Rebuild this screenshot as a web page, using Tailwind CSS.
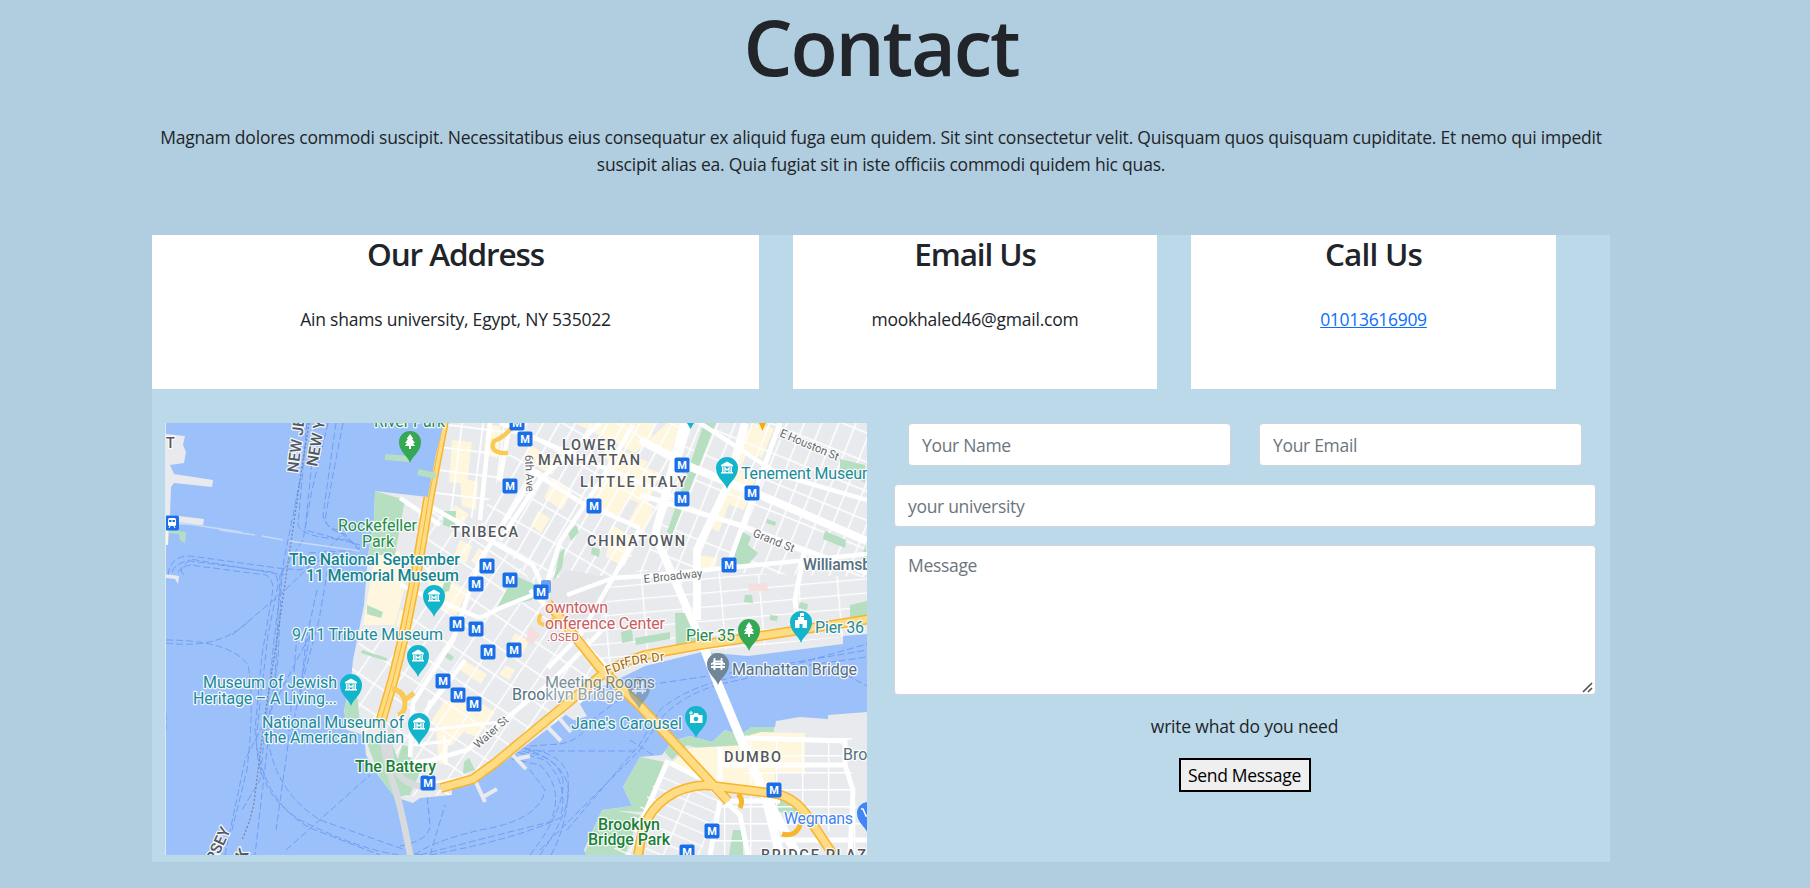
<!DOCTYPE html>
<html lang="en">
<head>
<meta charset="utf-8">
<title>Contact</title>
<script src="https://cdn.jsdelivr.net/npm/@tailwindcss/browser@4"></script>
</head>
<body class="h-[888px] overflow-hidden bg-[#b1cee0] font-['Segoe_UI','Open_Sans',sans-serif] text-[17.5px] leading-[27px] text-[#212529]">
<main class="ml-[152px] w-[1458px]">
  <header class="h-[235px] text-center">
    <h1 class="h-[96px] text-[77.5px] leading-[93px] font-semibold tracking-[-2.2px]">Contact</h1>
    <p class="pt-[28px] tracking-[-0.21px] whitespace-nowrap">Magnam dolores commodi suscipit. Necessitatibus eius consequatur ex aliquid fuga eum quidem. Sit sint consectetur velit. Quisquam quos quisquam cupiditate. Et nemo qui impedit<br>suscipit alias ea. Quia fugiat sit in iste officiis commodi quidem hic quas.</p>
  </header>
  <section class="h-[627px] bg-[#bcd9ea]">
    <div class="flex gap-[34px] text-center tracking-[-0.21px]">
      <div class="h-[154px] w-[607px] bg-white">
        <h2 class="mb-[28px] text-[31.5px] leading-[38px] font-semibold tracking-[-1.1px]">Our Address</h2>
        <p class="pt-[5px]">Ain shams university, Egypt, NY 535022</p>
      </div>
      <div class="h-[154px] w-[364px] bg-white">
        <h2 class="mb-[28px] text-[31.5px] leading-[38px] font-semibold tracking-[-1.1px]">Email Us</h2>
        <p class="pt-[5px]">mookhaled46@gmail.com</p>
      </div>
      <div class="h-[154px] w-[365px] bg-white">
        <h2 class="mb-[28px] text-[31.5px] leading-[38px] font-semibold tracking-[-0.8px]">Call Us</h2>
        <p class="pt-[5px]"><a href="#" class="tracking-[-0.31px] text-[#0d6efd] underline">01013616909</a></p>
      </div>
    </div>
    <div class="mt-[34px] flex gap-7 pl-[14px]">
      <svg class="-ml-px block h-[432px] w-[702px] shrink-0" viewBox="165 423 702 432" font-family="Roboto, sans-serif">
        <defs>
          <g id="m"><rect x="-7.5" y="-7.5" width="15" height="15" rx="2" fill="#1a6fe8"/><text y="4" text-anchor="middle" font-size="11" font-weight="700" fill="#fff">M</text></g>
          <path id="pin" d="M0 21C-2 14-11 10-11 0a11 11 0 0 1 22 0C11 10 2 14 0 21Z"/>
          <g id="museum"><use href="#pin" fill="#12b5cb"/><path d="M-6-3 0-6.500 6-3v1.500H-6ZM-5-1h1.500v5H-5ZM3.500-1H5v5H3.500ZM-6 4H6v1.500H-6Z" fill="#fff"/><path d="M-2 4v-4l2 2 2-2v4" fill="none" stroke="#fff" stroke-width="1.300"/></g>
          <g id="tree"><use href="#pin" fill="#34a853"/><path d="M0-8 3.500-3H2l3 4H3l2 3H1v3h-2V4h-4l2-3h-2l3-4h-1.500Z" fill="#fff"/></g>
          <pattern id="gA" width="21" height="23" patternUnits="userSpaceOnUse" patternTransform="translate(440 423) rotate(7)"><path d="M0 0H21M0 0V23" stroke="#fff" stroke-width="3.400"/></pattern>
          <pattern id="gB" width="14" height="27" patternUnits="userSpaceOnUse" patternTransform="translate(510 423) rotate(30)"><path d="M0 0H14M0 0V27" stroke="#fff" stroke-width="3.200"/></pattern>
          <pattern id="gC" width="16" height="27" patternUnits="userSpaceOnUse" patternTransform="translate(700 423) rotate(22)"><path d="M0 0H16M0 0V27" stroke="#fff" stroke-width="3"/></pattern>
          <pattern id="gD" width="39" height="14" patternUnits="userSpaceOnUse" patternTransform="translate(640 570) rotate(-5)"><path d="M0 0H39M0 0V14" stroke="#fff" stroke-width="2.600"/></pattern>
          <pattern id="gE" width="19" height="25" patternUnits="userSpaceOnUse" patternTransform="translate(430 600) rotate(34)"><path d="M0 0H19M0 0V25" stroke="#fff" stroke-width="2.800"/></pattern>
          <pattern id="gF" width="26" height="17" patternUnits="userSpaceOnUse" patternTransform="translate(750 738)"><path d="M0 0H26M0 0V17" stroke="#fff" stroke-width="2.800"/></pattern>
          <pattern id="gG" width="32" height="12" patternUnits="userSpaceOnUse" patternTransform="translate(666 765) rotate(23)"><path d="M0 0H32M0 0V12" stroke="#fff" stroke-width="2.600"/></pattern>
          <clipPath id="land"><path id="shore" d="M444 423 436 455 428 497 375 491 374 520 368 555 366 580 364 605 360 625 353 660 351 680 344 710 347 730 364 735 366 755 380 778 395 797 413 803 420 798 452 795 452 785 473 782 500 765 545 731 600 688 645 666 702 652 748 656 843 644 843 636 867 634V423Z"/></clipPath>
          <clipPath id="bk"><path id="bkshore" d="M867 712 828 715 828 719 800 717 776 721 775 727 752 727 740 735 725 730 712 742 690 736 672 741 662 755 640 757 623 787 632 806 602 810 584 850 586 855H867Z"/></clipPath>
        </defs>
        <rect x="165" y="423" width="702" height="432" fill="#9cc0fa"/>
        <!-- New Jersey piers -->
        <g fill="#e8eaed"><path d="M166 434 185 436 183 445 186 452 184 463 170 465 174 474 213 480 212 487 174 483 171 487 170 515 204 519 203 525 166 524Z"/><path d="m166 574 13 2-1 8-3-5-9-1Z"/></g>
        <path d="m169 530 17 2-1 11-5-3-1-6-10-1Z" fill="#b5dfc0"/><path d="M166 525h3l-1 20h-2Z" fill="#fef6dd"/>
        <!-- ferry routes -->
        <g fill="none" stroke="#6f9ff4" stroke-width="1" stroke-dasharray="7 3">
          <path d="M328 423 312 490 303 540 280 575 275 680 255 855M336 423 323 515Q325 528 338 530L360 550 308 553M343 423 332 480 325 520Q330 532 345 534L360 552M307 423 298 525Q302 538 350 540L360 548M316 423 305 530 360 545M300 480 284 560 274 640 260 780 242 810"/>
          <path d="M168 575Q170 556 190 556L278 568 300 570 335 553M172 572Q176 562 190 561L272 572Q280 576 277 590L268 635 257 730Q252 790 300 820 360 850 400 855M184 575Q176 568 190 565L266 575Q275 580 272 595L262 655 255 730Q260 800 310 828L380 855M178 572 190 559 284 575M282 570 278 660 267 730Q272 790 320 820L420 855"/>
          <path d="m232 635 50-42 60-58M166 640Q230 640 248 665 255 700 247 770L232 830M166 643Q220 650 250 620M297 635 288 745 276 830 M310 635 290 742M286 850 370 775M225 855 245 760 310 635M317 590 306 640 300 700M331 550 319 620 300 690"/>
          <path d="M415 855Q430 842 480 830 540 820 545 790L530 770Q505 750 520 740M420 855Q500 834 550 822 565 790 540 765L512 759M430 855Q520 838 560 818 570 785 545 760L510 750M530 855Q565 810 563 780 558 758 530 753L518 750M540 855Q572 810 568 785 560 757 518 747M551 855Q570 820 568 775 560 750 518 748M528 751H640M530 746 560 744Q582 740 592 720L625 695M400 846Q430 840 430 825L427 795M430 855 445 805M540 850 640 750 662 717Q690 688 740 680L867 644M567 830 640 744 660 710Q690 683 760 672L867 657M640 686 750 670 867 650M838 670 867 686M630 740 656 757M166 730v-20"/>
        </g>
        <path d="M309 423 300 480 287 570 276 645 265 715 255 795Q253 815 242 840" fill="none" stroke="#7587a8" stroke-width="1.300" stroke-dasharray="2 2"/>
        <path d="m175 522 66 10M220 530 255 535M262 536 283 540M289 541 360 551" stroke="#c7dafa" stroke-width="1.500"/>
        <!-- piers -->
        <g stroke="#e8eaed" stroke-width="4" fill="none"><path d="m475 780 10 22M483 797 497 789M510 752 526 769M516 759 530 756M534 713 561 741M548 705 571 732"/><path d="m552 703 18-12 14 24-10 3-14-10Z" fill="#e8eaed"/></g>
        <!-- Manhattan -->
        <use href="#shore" fill="#e8eaed"/>
        <g clip-path="url(#land)">
          <g fill="#fef6dd">
            <path d="m452 440 20 2-5 42-18-2ZM460 478l18 4-2 28-14-4ZM487 425l14 1-3 32-14-3ZM455 505l14 9-8 14-14-8ZM375 555l25-4 5 34-10 40-32 0ZM430 570l38 20-12 25-30-12ZM460 540l12 6-6 17-12-7ZM479 548l9 6-8 13-9-6ZM530 445l30 18-8 12-28-16ZM575 423l60 30 32-30ZM600 440l48 22-30 55-28-12 20-38ZM640 465l20 8-13 33-18-7ZM553 478l20 12-11 20-18-12ZM538 511l12 7-9 15-10-8ZM612 525l24 14-12 28-18-10ZM640 500l14 6-10 26-16-10ZM655 423l26 0-10 30-22-8ZM752 423l22 5-12 30-16-7ZM738 470l18 8-12 32-16-6ZM700 555l18 3-4 13-18-3ZM746 430l8 2-35 100-10-5Z"/>
            <path d="m445 700 22 4 4 20-20 22-14-6 4-14-10-4ZM470 695l25 18-18 24-12-4ZM436 730l12 0v34h-9ZM506 665l9 5-6 10-10-6ZM463 660l24 14-6 10-24-16ZM515 633l14 8-6 12-14-8ZM400 610l12 4-6 16-10-4Z"/>
          </g>
          <path d="M436 423H527L500 475 480 520 420 505Z" fill="url(#gA)"/>
          <path d="M527 423H694L650 535 613 578 541 592 480 520 500 475Z" fill="url(#gB)"/>
          <path d="M694 423H867V577L640 570 655 535Z" fill="url(#gC)"/>
          <path d="M640 570 867 577V634L590 665 567 595Z" fill="url(#gD)"/>
          <path d="M420 505 480 520 541 592 590 640 600 690 452 795 395 797 340 700 360 640 400 635Z" fill="url(#gE)"/>
          <g fill="#b5dfc0">
            <path d="M375 491 405 500 395 555 368 555ZM444 511l12 0-1 18-12-4ZM497 608 514 575 542 588 532 600ZM704 423h12L672 535l-5-3ZM568 533l8-8 3 7-8 9ZM560 552l5-4-3 20-9 14ZM592 547l8 2-1 8-8-3ZM840 459l25 6v18l-25-15ZM825 531l21 9-1 8-22-9ZM741 531l10 6-3 8 10 8-13 15-12-7ZM745 595h7l1 8-9-1ZM675 613l14 0 8 28-21 5ZM621 632l11-3 1 12-11 2ZM635 638l35-6v7l-34 6ZM850 605l17-4v20l-17 3ZM800 602l8 2-1 6-9-2ZM866 545l1 18-6-6ZM767 519l9 3-1 4-9-3ZM367 605l16 7-2 6-14-4ZM362 650l25 8-1 3-25-8ZM351 683 358 700 360 728 347 728 344 710ZM364 735 390 738 400 765 421 770 410 795 395 797 380 778ZM402 745l8 2 1 22-14-6ZM464 762l5-4 6 12-12 4ZM444 583l8-4-3 12-8 2ZM770 615l8 1-1 5-7-1ZM445 651l9 6-3 4-8-5Z"/>
          </g>
          <path d="m748 584 19-1 1 8-19 0ZM530 625l10 10-8 10-6-4Z" fill="#f7dede"/>
          <path d="M541 592 567 570 613 578 600 620 565 625Z" fill="#e4e5e9"/>
          <g stroke="#fff" fill="none" stroke-width="4.500">
            <path d="M428 505 533 565 548 598M400 498 440 525M633 425 600 482 560 542 547 582M527 468 580 502 640 528M480 618 500 608 540 592M567 595 613 578 645 576 867 554M490 423 480 520M538 470 480 560 453 640 413 703 410 757M465 660 427 710M510 423 500 480M600 423 540 480 500 540M640 528 613 578 580 635 548 668M690 423 655 535M410 763 432 760 467 750 550 683 612 620M867 500 780 475 700 423M500 423 590 462 680 499M530 590 605 665M400 585 480 618"/>
            <path d="M427 730 500 722M412 745 450 741M446 765 444 735M433 783 480 775M420 740 430 700" stroke-width="2.800"/>
            <path stroke-width="8" d="M640 440 693 468 767 498 867 541M745 423 728 485 697 550 697 620M655 535 703 645M684 423 655 535"/>
            <path stroke-width="5" d="M640 495 740 525 800 548 867 573M804 553 795 600 797 615M780 423 730 560"/>
          </g>
          <path d="M444 418 429 497 415 580 404 635 393 680 380 724" fill="none" stroke="#f9b42d" stroke-width="11"/>
          <path d="M444 418 429 497 415 580 404 635 393 680 380 724" fill="none" stroke="#fedc84" stroke-width="8"/>
          <path d="M444 418 429 497 415 580 404 635 393 680 380 724" fill="none" stroke="#f9b42d"/>
          <path d="M392 689Q405 691 405 704 405 713 398 715M404 701 414 693" fill="none" stroke="#fbca55" stroke-width="5"/>
          <path d="M512 427Q505 437 494 441 489 451 502 453L508 453" fill="none" stroke="#fbca55" stroke-width="4.500"/>
        </g>
        <path d="M382 722Q382 750 392 780 400 800 411 860M392 726Q384 760 402 778 415 790 441 786" fill="none" stroke="#d9dade" stroke-width="6.500"/>
        <path d="M418 472 436 476M385 457 410 459" stroke="#b5dfc0" stroke-width="6"/>
        <!-- Brooklyn -->
        <use href="#bkshore" fill="#e8eaed"/>
        <g clip-path="url(#bk)">
          <path d="M752 727H774V738L745 740 740 760 687 745 672 760 660 747 690 731ZM640 757 664 762 645 812 602 810ZM602 808 640 815 625 855 584 855ZM733 830h10v25h-14ZM774 797l25 6-2 12-24-4Z" fill="#b5dfc0"/>
          <path d="M761 732 805 733 805 772 775 772 775 795 740 790 710 778 690 775 672 762 690 748 745 745 750 735Z" fill="#fef6dd"/>
          <path d="M745 738H852V790L870 855H850L800 800 745 790Z" fill="url(#gF)"/><path d="M665 765 720 800 700 855H610L645 800Z" fill="url(#gG)"/><path d="M720 790H800V855H710Z" fill="url(#gF)"/>
          <g stroke="#fff" fill="none" stroke-width="5"><path d="M668 760 640 825M670 763 700 778 740 815 748 855M720 801 710 855M720 765H845M720 747V785M745 738 845 741 845 765 853 790 850 855M730 801H780M775 840H867"/></g>
        </g>
        <path d="M703 645 718 684 740 737 765 795 800 860M765 795 780 855" fill="none" stroke="#fff" stroke-width="9"/>
        <g fill="none" stroke="#f9b42d" stroke-width="10">
          <path d="M441 788 473 779 495 763 535 730 604 673Q620 663 645 655L700 645 780 633 870 619"/>
          <path d="M548 603 600 668 640 706 728 801M638 855 643 828Q660 788 705 785L770 793Q795 795 810 820L838 862"/>
          <path d="M782 834Q797 838 801 822M740 808Q744 800 738 794M640 860 645 828" stroke-width="5"/>
        </g>
        <g fill="none" stroke="#fedc84" stroke-width="7">
          <path d="M441 788 473 779 495 763 535 730 604 673Q620 663 645 655L700 645 780 633 870 619M548 603 600 668 640 706 728 801M638 855 643 828Q660 788 705 785L770 793Q795 795 810 820L838 862"/>
        </g>
        <path d="M541 614Q535 624 546 625L556 617" fill="none" stroke="#fbca55" stroke-width="4"/>
        <!-- markers -->
        <g>
          <rect x="541" y="580" width="10" height="13" rx="2" fill="#6ca1ee"/>
          <use href="#m" x="525" y="439"/><use href="#m" x="517" y="423"/><use href="#m" x="510" y="486"/><use href="#m" x="594" y="506"/><use href="#m" x="487" y="566"/><use href="#m" x="510" y="580"/><use href="#m" x="476" y="584"/><use href="#m" x="541" y="592"/><use href="#m" x="457" y="624"/><use href="#m" x="476" y="629"/><use href="#m" x="682" y="465"/><use href="#m" x="682" y="499"/><use href="#m" x="752" y="493"/><use href="#m" x="729" y="565"/><use href="#m" x="488" y="652"/><use href="#m" x="514" y="650"/><use href="#m" x="443" y="681"/><use href="#m" x="458" y="695"/><use href="#m" x="474" y="704"/><use href="#m" x="428" y="783"/><use href="#m" x="774" y="790"/><use href="#m" x="712" y="831"/><use href="#m" x="687" y="852"/>
          <g transform="translate(172 523)"><rect x="-7" y="-7.500" width="14" height="15" rx="2" fill="#1a6fe8"/><rect x="-4" y="-5" width="8" height="8" rx="1.500" fill="#fff"/><path d="M-3-3h2.500v2H-3ZM.5-3H3v2H.5Z" fill="#1a6fe8"/><path d="m-3 5 1-2M3 5 2 3" stroke="#fff"/></g>
          <use href="#tree" x="410" y="442"/><use href="#tree" x="749" y="630"/>
          <use href="#museum" x="434" y="596"/><use href="#museum" x="727" y="468"/><use href="#museum" x="351" y="685"/><use href="#museum" x="418" y="656"/><use href="#museum" x="419" y="724"/>
          <g transform="translate(801 622)"><use href="#pin" fill="#12b5cb"/><path d="M-6 6V-2h3v-3h2v-4h4v3H0v1h3v3h3v8H1.500V2h-3v4Z" fill="#fff"/></g>
          <g transform="translate(718 664)"><use href="#pin" fill="#6f8796"/><path d="M-3.500-6V6M3.500-6V6M-7 3H7M-3.500-2.500H3.500M-7 0Q-3.500 0-3.500-5M7 0Q3.500 0 3.500-5M-3.500 0H3.500" fill="none" stroke="#fff" stroke-width="1.800"/></g>
          <g transform="translate(639 688)" opacity=".55"><use href="#pin" fill="#6f8796"/><path d="M-3.500-6V6M3.500-6V6M-7 3H7M-3.500-2.500H3.500" fill="none" stroke="#fff" stroke-width="1.800"/></g>
          <g transform="translate(696 717)"><use href="#pin" fill="#12b5cb"/><path d="M-6-2h3l1.500-2h3L3-2h3.500v8H-6Z" fill="#fff"/><circle cy="2" r="2.300" fill="#12b5cb"/><path d="M-7-4h4M-5-6v4" stroke="#fff"/></g>
          <g transform="translate(868 813)"><use href="#pin" fill="#4285f4"/><path d="M-7-4h2l3 7H5" fill="none" stroke="#fff" stroke-width="1.500"/></g>
          <path d="m687 423 3.500 6 3.500-6Z" fill="#12b5cb"/><path d="m759 423 3.500 8 3.500-8Z" fill="#f9ab00"/>
        </g>
        <!-- labels -->
        <g font-size="16" stroke="#fff" stroke-width="2.600" stroke-linejoin="round" paint-order="stroke" stroke-opacity=".85">
          <g fill="#54585d" font-weight="500" font-size="14.500">
            <text x="562" y="450" textLength="54">LOWER</text><text x="538" y="465" textLength="102">MANHATTAN</text><text x="580" y="487" textLength="106">LITTLE ITALY</text><text x="451" y="537" textLength="67">TRIBECA</text><text x="587" y="546" textLength="98">CHINATOWN</text><text x="724" y="762" textLength="57">DUMBO</text><text x="761" y="860" textLength="105">BRIDGE PLAZ</text><text x="166" y="448">T</text>
            <text transform="translate(298 473) rotate(-83)" font-size="15.500">NEW JERSEY</text><text transform="translate(317 467) rotate(-80)" font-size="15.500">NEW YORK</text>
            <text transform="translate(208 879) rotate(-65)" font-size="15.500" textLength="54">JERSEY</text><text transform="translate(226 887) rotate(-56)" font-size="15.500" textLength="41">YORK</text>
          </g>
          <g fill="#1c8b9a">
            <text x="741" y="479" textLength="135">Tenement Museum</text><text x="292" y="640" textLength="151">9/11 Tribute Museum</text><text x="203" y="688" textLength="134">Museum of Jewish</text><text x="193" y="704" textLength="144">Heritage – A Living...</text><text x="262" y="728" textLength="142">National Museum of</text><text x="264" y="743" textLength="140">the American Indian</text><text x="571" y="729" textLength="111">Jane's Carousel</text><text x="815" y="633" textLength="49">Pier 36</text>
            <g font-weight="500" fill="#15858f"><text x="289" y="565" textLength="171">The National September</text><text x="306" y="581" textLength="153">11 Memorial Museum</text></g>
          </g>
          <g fill="#258b48"><text x="374" y="427" textLength="71">River Park</text><text x="338" y="531" textLength="79">Rockefeller</text><text x="362" y="547" textLength="32">Park</text><text x="686" y="641" textLength="49">Pier 35</text>
            <g font-weight="500" fill="#1b8038"><text x="355" y="772" textLength="81">The Battery</text><text x="598" y="830" textLength="62">Brooklyn</text><text x="588" y="845" textLength="82">Bridge Park</text></g>
          </g>
          <g fill="#54707f"><text x="732" y="675" textLength="125">Manhattan Bridge</text><text x="803" y="570" font-weight="500" textLength="91">Williamsburg</text><text x="843" y="760">Brooklyn</text><text x="545" y="688" textLength="110" opacity=".75">Meeting Rooms</text><text x="512" y="700" textLength="111"><tspan fill="#54707f">Broo</tspan><tspan fill="#8fa2ad">klyn Bridge</tspan></text></g>
          <g fill="#ca5d62"><text x="545" y="613" textLength="63">owntown</text><text x="545" y="629" textLength="120">onference Center</text><text x="547" y="641" font-size="11.500" textLength="32">.OSED</text></g>
          <text x="784" y="824" fill="#4285f4" textLength="69">Wegmans</text>
          <g fill="#65686c" font-size="11.500"><text transform="translate(779 436) rotate(23)" textLength="63">E Houston St</text><text transform="translate(752 536) rotate(22)" textLength="44">Grand St</text><text transform="translate(644 583) rotate(-6)" textLength="59">E Broadway</text><text transform="translate(525 455) rotate(88)" textLength="37">6th Ave</text><text transform="translate(478 749) rotate(-42)" textLength="42">Water St</text><text transform="translate(607 675) rotate(-20)" fill="#946719" font-size="12.500" textLength="24">FDR</text><text transform="translate(625 666) rotate(-8)" fill="#946719" font-size="12.500" textLength="40">FDR Dr</text></g>
        </g>
        <path d="M165.500 423V855" stroke="#dce9f8"/>
      </svg>
      <form class="w-[701px] tracking-[-0.21px]">
        <div class="-ml-px flex gap-7 px-[14px]">
          <input placeholder="Your Name" class="h-[43px] w-[323px] rounded-[4px] border border-[#ced4da] bg-white px-[13px] tracking-[-0.31px] placeholder:text-[#6c757d]">
          <input placeholder="Your Email" class="h-[43px] w-[323px] rounded-[4px] border border-[#ced4da] bg-white px-[13px] tracking-[-0.31px] placeholder:text-[#6c757d]">
        </div>
        <input placeholder="your university" class="mt-[18px] -ml-px block h-[43px] w-[702px] rounded-[4px] border border-[#ced4da] bg-white px-[13px] tracking-[-0.31px] placeholder:text-[#6c757d]">
        <div class="relative mt-[18px] -ml-px w-[702px]">
          <textarea placeholder="Message" class="block h-[150px] w-full resize-none rounded-[4px] border border-[#ced4da] bg-white px-[13px] py-[6px] tracking-[-0.31px] placeholder:text-[#6c757d]"></textarea>
          <svg class="absolute right-[3px] bottom-[2px] h-[11px] w-[11px]" viewBox="0 0 11 11"><path d="M1 10 10 1M6 10 10 6" stroke="#555" stroke-width="1.700" fill="none"/></svg>
        </div>
        <p class="mt-[18px] -ml-0.5 text-center">write what do you need</p>
        <div class="mt-[18px] -ml-0.5 flex justify-center"><button type="button" class="h-[34px] w-[132px] border-2 border-black bg-[#efefef] leading-[28px] tracking-[-0.31px] whitespace-nowrap text-black">Send Message</button></div>
      </form>
    </div>
  </section>
</main>
</body>
</html>
